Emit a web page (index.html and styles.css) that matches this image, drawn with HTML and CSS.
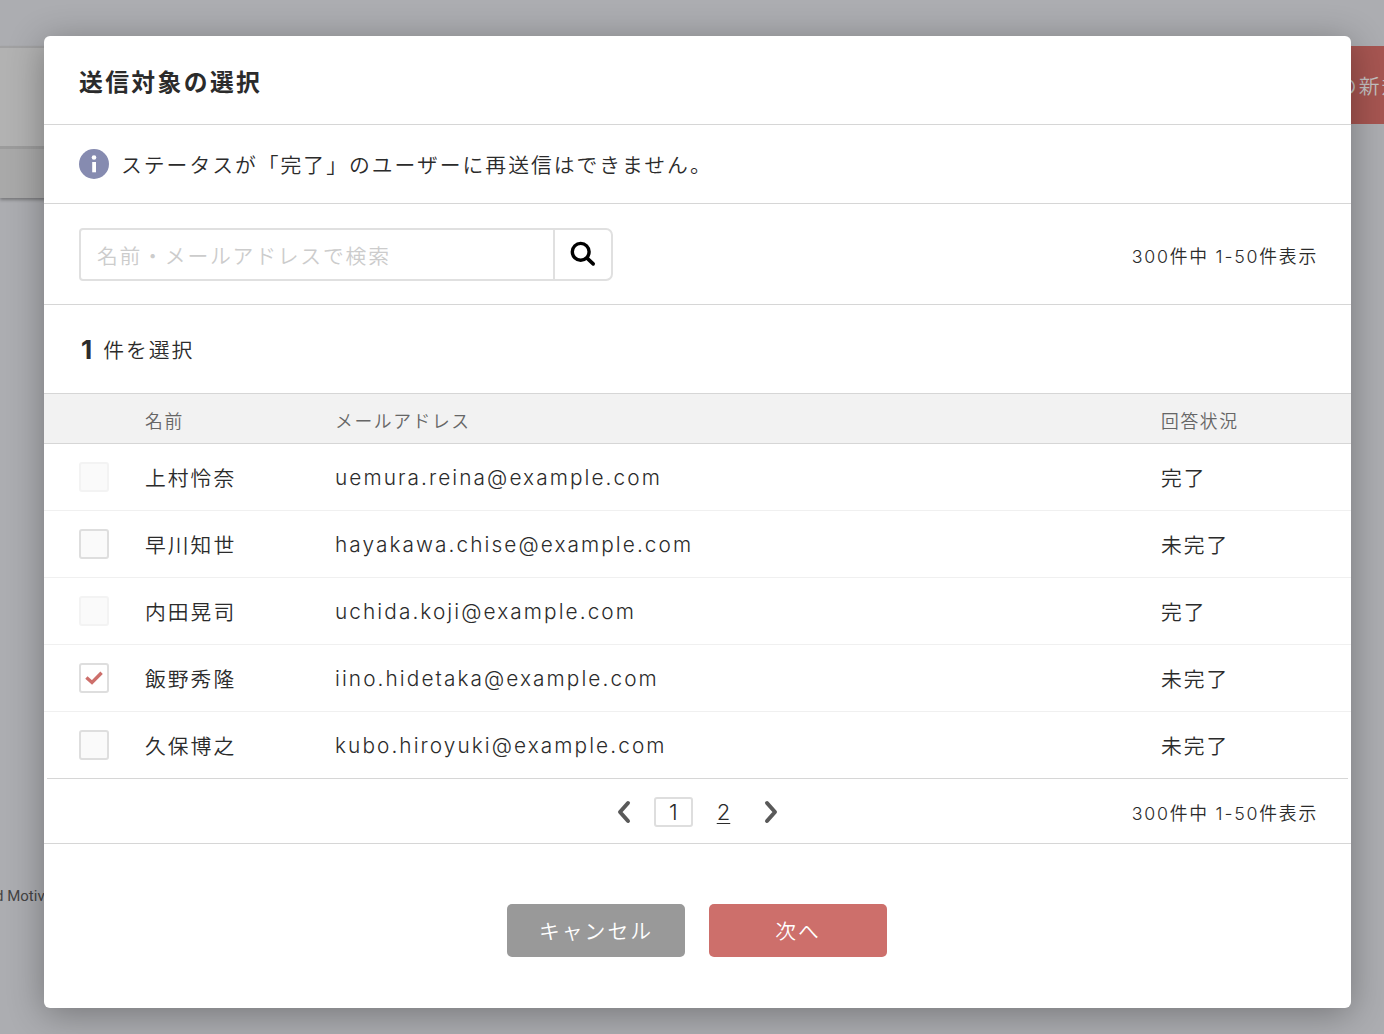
FILE: index.html
```
<!DOCTYPE html>
<html lang="ja">
<head>
    <meta charset="UTF-8">
    <meta name="viewport" content="width=device-width, initial-scale=1.0">
    <title>送信対象の選択</title>
    <link rel="stylesheet" href="styles.css">
</head>
<body>
    <div class="page">
        <div class="page-top">
            <div class="page-panel">
                <div class="page-panel-body"></div>
                <div class="page-panel-foot"></div>
            </div>
            <div class="page-create">の新規</div>
        </div>
        <div class="page-footer"><span>d Motivation</span></div>
    </div>

    <div class="overlay">
        <div class="modal">
            <h2 class="modal-title">送信対象の選択</h2>

            <div class="info">
                <svg class="info-icon" viewBox="0 0 30 30">
                    <circle cx="15" cy="15" r="15" fill="#868bb0"/>
                    <circle cx="15" cy="8.5" r="2.3" fill="#fff"/>
                    <rect x="13.2" y="13" width="3.8" height="10.3" fill="#fff"/>
                </svg>
                <span>ステータスが「完了」のユーザーに再送信はできません。</span>
            </div>

            <div class="search-row">
                <div class="search">
                    <input type="text" class="search-input" placeholder="名前・メールアドレスで検索">
                    <button class="search-button" aria-label="検索">
                        <svg width="26" height="26" viewBox="0 0 26 26" fill="none" stroke="#000" stroke-linecap="round">
                            <circle cx="10.7" cy="10.8" r="8.4" stroke-width="3.4"/>
                            <path d="M17.3 17.4L23.2 22.9" stroke-width="3.6"/>
                        </svg>
                    </button>
                </div>
                <span class="range">300件中 1-50件表示</span>
            </div>

            <div class="selected"><strong>1</strong>件を選択</div>

            <table class="users">
                <thead>
                    <tr>
                        <th class="col-check"></th>
                        <th class="col-name">名前</th>
                        <th class="col-mail">メールアドレス</th>
                        <th>回答状況</th>
                    </tr>
                </thead>
                <tbody>
                    <tr>
                        <td class="col-check"><span class="check disabled"></span></td>
                        <td>上村怜奈</td>
                        <td class="mail">uemura.reina@example.com</td>
                        <td>完了</td>
                    </tr>
                    <tr>
                        <td class="col-check"><span class="check"></span></td>
                        <td>早川知世</td>
                        <td class="mail">hayakawa.chise@example.com</td>
                        <td>未完了</td>
                    </tr>
                    <tr>
                        <td class="col-check"><span class="check disabled"></span></td>
                        <td>内田晃司</td>
                        <td class="mail">uchida.koji@example.com</td>
                        <td>完了</td>
                    </tr>
                    <tr>
                        <td class="col-check">
                            <span class="check checked">
                                <svg width="20" height="16" viewBox="0 0 20 16" fill="none" stroke="#cd6f6b" stroke-width="3.4">
                                    <path d="M2.4 7.4L8 12.4L17.6 2.8"/>
                                </svg>
                            </span>
                        </td>
                        <td>飯野秀隆</td>
                        <td class="mail">iino.hidetaka@example.com</td>
                        <td>未完了</td>
                    </tr>
                    <tr>
                        <td class="col-check"><span class="check"></span></td>
                        <td>久保博之</td>
                        <td class="mail">kubo.hiroyuki@example.com</td>
                        <td>未完了</td>
                    </tr>
                </tbody>
            </table>

            <div class="pager-row">
                <div class="pager">
                    <svg width="14" height="24" viewBox="0 0 14 24" fill="none" stroke="#595959" stroke-width="4" stroke-linecap="round" stroke-linejoin="round">
                        <path d="M11 3L3 12L11 21"/>
                    </svg>
                    <span class="page-now">1</span>
                    <a class="page-link">2</a>
                    <svg width="14" height="24" viewBox="0 0 14 24" fill="none" stroke="#595959" stroke-width="4" stroke-linecap="round" stroke-linejoin="round">
                        <path d="M3 3L11 12L3 21"/>
                    </svg>
                </div>
                <span class="range">300件中 1-50件表示</span>
            </div>

            <div class="actions">
                <button class="button cancel">キャンセル</button>
                <button class="button next">次へ</button>
            </div>
        </div>
    </div>
</body>
</html>
```

FILE: styles.css
```
* {
    box-sizing: border-box;
}

body {
    margin: 0;
    height: 1034px;
    overflow: hidden;
    background-color: #acadb1;
    color: #2b2b2b;
    font-family: "Noto Sans CJK JP", sans-serif;
    font-size: 20.8px;
    font-weight: 350;
    letter-spacing: 2px;
}

/* dimmed page behind the modal */
.page {
    height: 1034px;
    padding-top: 46px;
    display: flex;
    flex-direction: column;
}

.page-top {
    display: flex;
    justify-content: space-between;
    align-items: flex-start;
}

.page-panel {
    width: 200px;
    border-top: 2px solid #a1a1a2;
    box-shadow: 0 2px 3px rgba(0, 0, 0, 0.3);
}

.page-panel-body {
    height: 98px;
    background: #b2b2b2;
    border-bottom: 3px solid #9c9c9c;
    box-sizing: content-box;
}

.page-panel-foot {
    height: 49px;
    background: #a9a9a9;
}

.page-create {
    width: 48px;
    height: 78px;
    line-height: 79px;
    background: #a65551;
    color: #c4c2c2;
    white-space: nowrap;
    overflow: hidden;
}

.page-footer {
    margin-top: 689px;
    font-family: Roboto, sans-serif;
    font-size: 15px;
    font-weight: 400;
    letter-spacing: 0;
    color: #444;
}

.page-footer span {
    margin-left: -5px;
}

.overlay {
    position: absolute;
    top: 0;
    left: 0;
    width: 1384px;
    height: 1034px;
    padding: 36px 33px 0 44px;
}

.modal {
    height: 972px;
    background: #fff;
    border-radius: 6px;
    box-shadow: 0 6px 36px rgba(0, 0, 0, 0.32);
}

.modal-title {
    height: 89px;
    margin: 0;
    padding-left: 35px;
    border-bottom: 1px solid #d6d6d6;
    font-size: 23.8px;
    line-height: 90px;
    letter-spacing: 2.38px;
}

.info {
    height: 79px;
    padding-left: 35px;
    display: flex;
    align-items: center;
    gap: 12px;
    border-bottom: 1px solid #d6d6d6;
}

.info-icon {
    width: 30px;
    height: 30px;
}

.search-row {
    height: 101px;
    padding: 1px 33px 0 35px;
    display: flex;
    justify-content: space-between;
    align-items: center;
    border-bottom: 1px solid #d6d6d6;
}

.search {
    width: 534px;
    height: 53px;
    display: flex;
    border: 2px solid #e0e0e0;
    border-radius: 4px 7px 7px 4px;
}

.search-input {
    flex: 1;
    min-width: 0;
    padding: 1px 0 0 16px;
    border: none;
    background: none;
    font: inherit;
    letter-spacing: 1.8px;
}

.search-input::placeholder {
    color: #ccc;
}

.search-button {
    width: 58px;
    padding: 2px 0 0;
    border: none;
    border-left: 2px solid #e0e0e0;
    background: none;
}

.range {
    font-family: Inter, "Noto Sans CJK JP", sans-serif;
    font-size: 17.8px;
    letter-spacing: 1.78px;
}

.selected {
    height: 88px;
    padding-left: 37px;
    display: flex;
    align-items: center;
    gap: 11px;
}

.selected strong {
    font-family: Inter, sans-serif;
    font-size: 26px;
    font-weight: 700;
    letter-spacing: 0;
}

.users {
    width: 100%;
    border-collapse: separate;
    border-spacing: 0;
    table-layout: fixed;
}

.users th {
    height: 51px;
    padding: 2px 0 0;
    background: #f2f2f2;
    border-top: 1px solid #d6d6d6;
    border-bottom: 1px solid #d6d6d6;
    color: #666;
    font-size: 17.8px;
    font-weight: 350;
    letter-spacing: 1.6px;
    text-align: left;
}

.users td {
    height: 67px;
    padding: 0;
    border-bottom: 1px solid #f0f0f0;
}

.users tr:last-child td {
    height: 66px;
    border-bottom: none;
}

.users .col-check {
    width: 101px;
    padding-left: 35px;
}

.users .col-name {
    width: 190px;
}

.users .col-mail {
    width: 826px;
}

.mail {
    font-family: Inter, sans-serif;
    font-size: 20.8px;
    letter-spacing: 2.08px;
}

.check {
    width: 30px;
    height: 30px;
    display: flex;
    justify-content: center;
    align-items: center;
    background: #fafafa;
    border: 2px solid #dedede;
    border-radius: 3px;
}

.check.disabled {
    border-color: #f3f3f3;
}

.check.checked {
    background: #fff;
}

.pager-row {
    height: 65px;
    margin: 0 3px;
    padding: 1px 30px 0;
    display: grid;
    grid-template-columns: 1fr auto 1fr;
    align-items: center;
    border-top: 1px solid #d6d6d6;
}

.pager {
    grid-column: 2;
    display: flex;
    align-items: center;
    font-family: Inter, sans-serif;
    font-size: 22px;
}

.pager-row .range {
    justify-self: end;
}

.page-now {
    width: 39px;
    height: 30px;
    margin: 0 24px 0 23px;
    border: 2px solid #dedede;
    border-radius: 3px;
    line-height: 26px;
    text-align: center;
    letter-spacing: 0;
}

.page-link {
    margin-right: 34px;
    letter-spacing: 0;
    text-decoration: underline;
    text-decoration-thickness: 1px;
    text-underline-offset: 3px;
}

.actions {
    padding: 60px 1px 0 0;
    display: flex;
    justify-content: center;
    gap: 24px;
    border-top: 1px solid #d6d6d6;
}

.button {
    width: 178px;
    height: 53px;
    padding: 0 0 2px;
    border: none;
    border-radius: 5px;
    color: #fff;
    font: inherit;
    letter-spacing: 2px;
}

.cancel {
    background-color: #999;
}

.next {
    background-color: #cd6f6b;
}
```
